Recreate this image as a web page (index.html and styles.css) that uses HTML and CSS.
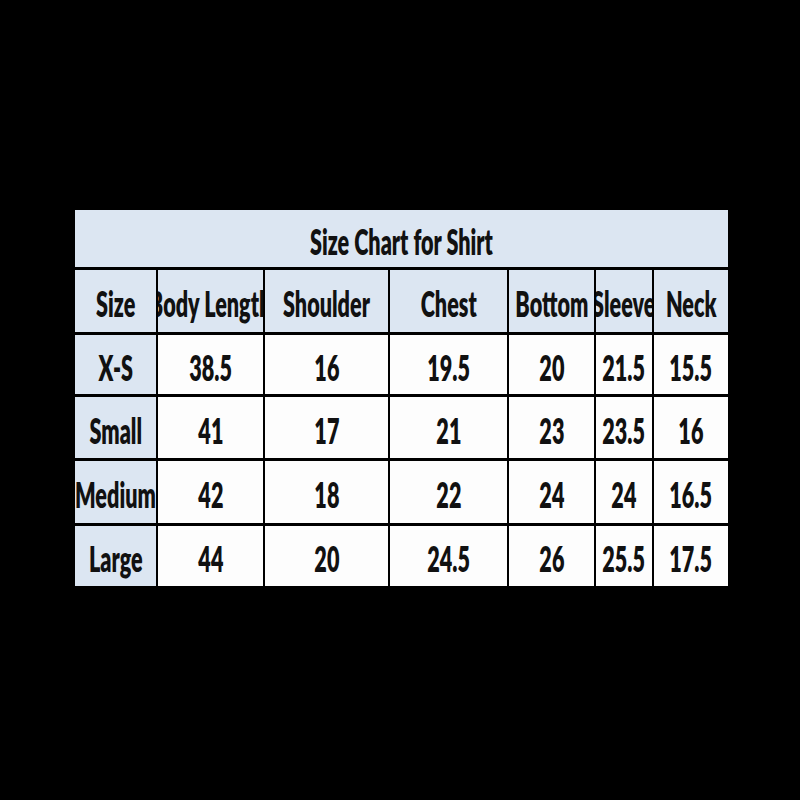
FILE: index.html
```html
<!DOCTYPE html>
<html>
<head>
<meta charset="utf-8">
<link rel="stylesheet" href="styles.css">
</head>
<body>
<div class="chart">
  <div class="cell title"><span class="txt">Size Chart for Shirt</span></div>

  <div class="cell head"><span class="txt">Size</span></div>
  <div class="cell head"><span class="txt">Body Length</span></div>
  <div class="cell head"><span class="txt">Shoulder</span></div>
  <div class="cell head"><span class="txt">Chest</span></div>
  <div class="cell head"><span class="txt">Bottom</span></div>
  <div class="cell head"><span class="txt">Sleeve</span></div>
  <div class="cell head"><span class="txt">Neck</span></div>

  <div class="cell size"><span class="txt">X-S</span></div>
  <div class="cell"><span class="txt">38.5</span></div>
  <div class="cell"><span class="txt">16</span></div>
  <div class="cell"><span class="txt">19.5</span></div>
  <div class="cell"><span class="txt">20</span></div>
  <div class="cell"><span class="txt">21.5</span></div>
  <div class="cell"><span class="txt">15.5</span></div>

  <div class="cell size"><span class="txt">Small</span></div>
  <div class="cell"><span class="txt">41</span></div>
  <div class="cell"><span class="txt">17</span></div>
  <div class="cell"><span class="txt">21</span></div>
  <div class="cell"><span class="txt">23</span></div>
  <div class="cell"><span class="txt">23.5</span></div>
  <div class="cell"><span class="txt">16</span></div>

  <div class="cell size"><span class="txt">Medium</span></div>
  <div class="cell"><span class="txt">42</span></div>
  <div class="cell"><span class="txt">18</span></div>
  <div class="cell"><span class="txt">22</span></div>
  <div class="cell"><span class="txt">24</span></div>
  <div class="cell"><span class="txt">24</span></div>
  <div class="cell"><span class="txt">16.5</span></div>

  <div class="cell size"><span class="txt">Large</span></div>
  <div class="cell"><span class="txt">44</span></div>
  <div class="cell"><span class="txt">20</span></div>
  <div class="cell"><span class="txt">24.5</span></div>
  <div class="cell"><span class="txt">26</span></div>
  <div class="cell"><span class="txt">25.5</span></div>
  <div class="cell"><span class="txt">17.5</span></div>
</div>
</body>
</html>
```
FILE: styles.css
```css
html, body {
  margin: 0;
  padding: 0;
  background: #000;
  width: 800px;
  height: 800px;
  overflow: hidden;
}

body {
  padding: 210px 0 0 75px;
  box-sizing: border-box;
}

.chart {
  display: grid;
  grid-template-columns: 81px 105px 123px 117px 85px 56px 74px;
  grid-template-rows: 57px 62px 59px 61px 62px 60px;
  column-gap: 2px;
  row-gap: 3px;
  width: 653px;
  background: #000;
  font-family: Lato, "Open Sans", sans-serif;
  font-weight: 800;
  color: #111;
}

.cell {
  background: #fdfdfd;
  display: flex;
  align-items: center;
  justify-content: center;
  overflow: hidden;
  padding-top: 4px;
  box-sizing: border-box;
}

.title {
  grid-column: 1 / -1;
  background: #dce6f2;
}

.head, .size {
  background: #dce6f2;
}

.txt {
  display: inline-block;
  white-space: nowrap;
  font-size: 36px;
  line-height: 1;
  transform: scaleX(0.6);
  transform-origin: center;
}
```
